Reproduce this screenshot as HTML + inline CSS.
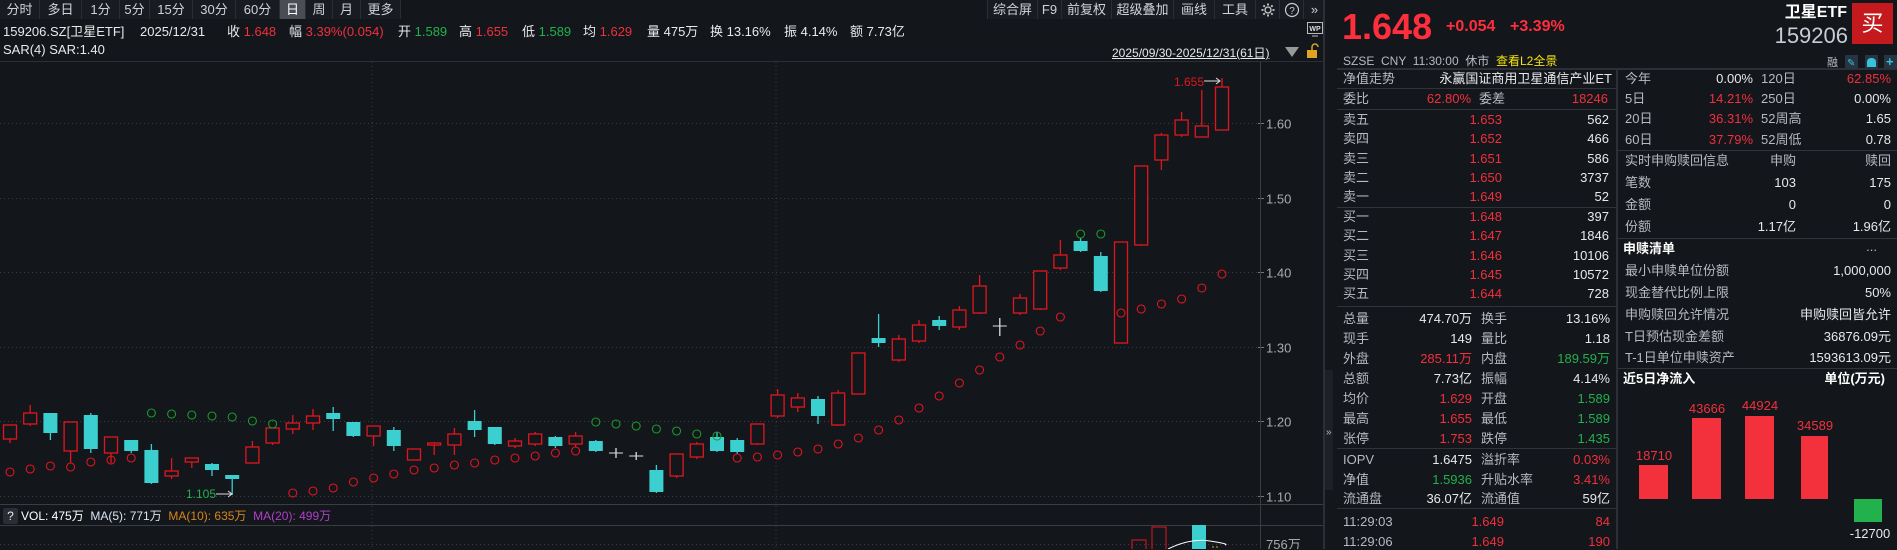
<!DOCTYPE html>
<html><head><meta charset="utf-8">
<style>
*{margin:0;padding:0;box-sizing:border-box}
body{width:1897px;height:549px;background:#13161b;overflow:hidden;position:relative;font-family:"Liberation Sans","Noto Sans CJK SC",sans-serif;color:#d9dbe0;font-size:13px}
.a{position:absolute;white-space:nowrap;line-height:16px}
.r{color:#f0303c}.g{color:#22b14c}.w{color:#e8e9ec}.l{color:#b6bac2}
.tb{position:absolute;top:0;height:19px;line-height:19px;font-size:13px;color:#d0d2d6;text-align:center;border-right:1px solid #2a2d33;background:#181b21}
.hl{position:absolute;height:1px;background:#30333a}
</style></head><body>
<div class="tb" style="left:0;width:40px">分时</div>
<div class="tb" style="left:40px;width:42px">多日</div>
<div class="tb" style="left:82px;width:38px">1分</div>
<div class="tb" style="left:120px;width:30px">5分</div>
<div class="tb" style="left:150px;width:43px">15分</div>
<div class="tb" style="left:193px;width:43px">30分</div>
<div class="tb" style="left:236px;width:44px">60分</div>
<div class="tb" style="left:280px;width:26px;background:#4a4d54;color:#fff">日</div>
<div class="tb" style="left:306px;width:27px">周</div>
<div class="tb" style="left:333px;width:28px">月</div>
<div class="tb" style="left:361px;width:40px">更多</div>
<div class="tb" style="left:987px;width:51px;border-left:1px solid #2a2d33">综合屏</div>
<div class="tb" style="left:1038px;width:24px">F9</div>
<div class="tb" style="left:1062px;width:50px">前复权</div>
<div class="tb" style="left:1112px;width:62px">超级叠加</div>
<div class="tb" style="left:1174px;width:41px">画线</div>
<div class="tb" style="left:1215px;width:41px">工具</div>
<div class="tb" style="left:1256px;width:24px"><svg width="16" height="16" style="margin-top:2px" viewBox="0 0 16 16"><circle cx="8" cy="8" r="3" fill="none" stroke="#ccc" stroke-width="1.3"/><path d="M8 1.5v2M8 12.5v2M1.5 8h2M12.5 8h2M3.4 3.4l1.4 1.4M11.2 11.2l1.4 1.4M3.4 12.6l1.4-1.4M11.2 4.8l1.4-1.4" stroke="#ccc" stroke-width="1.8"/></svg></div>
<div class="tb" style="left:1280px;width:24px"><svg width="16" height="16" style="margin-top:2px" viewBox="0 0 16 16"><circle cx="8" cy="8" r="6.5" fill="none" stroke="#ccc" stroke-width="1.2"/><text x="8" y="12" font-size="10" fill="#ccc" text-anchor="middle" font-family="Liberation Sans">?</text></svg></div>
<div class="tb" style="left:1304px;width:21px;border:none">»</div>

<div class="a w" style="left:3px;top:24px">159206.SZ[卫星ETF]</div>
<div class="a w" style="left:140px;top:24px">2025/12/31</div>
<div class="a w" style="left:227px;top:24px">收 <span class="r">1.648</span></div>
<div class="a w" style="left:289px;top:24px">幅 <span class="r">3.39%(0.054)</span></div>
<div class="a w" style="left:398px;top:24px">开 <span class="g">1.589</span></div>
<div class="a w" style="left:459px;top:24px">高 <span class="r">1.655</span></div>
<div class="a w" style="left:522px;top:24px">低 <span class="g">1.589</span></div>
<div class="a w" style="left:583px;top:24px">均 <span class="r">1.629</span></div>
<div class="a w" style="left:647px;top:24px">量 475万</div>
<div class="a w" style="left:710px;top:24px">换 13.16%</div>
<div class="a w" style="left:784px;top:24px">振 4.14%</div>
<div class="a w" style="left:850px;top:24px">额 7.73亿</div>
<div class="a w" style="left:3px;top:42px">SAR(4) SAR:1.40</div>
<svg class="a" style="left:1307px;top:22px" width="16" height="15" viewBox="0 0 16 15"><rect x="0.5" y="0.5" width="15" height="11" fill="none" stroke="#bbb"/><text x="8" y="9" font-size="7" fill="#ddd" text-anchor="middle" font-family="Liberation Sans" font-weight="bold">WP</text><path d="M5 14h6" stroke="#bbb"/></svg>
<div class="a w" style="left:1112px;top:45px;font-size:12px;text-decoration:underline">2025/09/30-2025/12/31(61日)</div>
<svg class="a" style="left:1284px;top:46px" width="16" height="12"><path d="M1 1h14L8 11z" fill="#999"/></svg>
<svg class="a" style="left:1305px;top:43px" width="16" height="16"><path d="M7 7V4a3 3 0 0 1 6 0" fill="none" stroke="#e0a420" stroke-width="1.5"/><rect x="2" y="7" width="10" height="8" fill="#e0a420"/></svg>

<svg id="ch" class="a" style="left:0;top:0" width="1325" height="549"></svg>

<div class="a w" style="left:3px;top:508px;width:15px;height:16px;background:#2a2d35;text-align:center;font-size:12px;border-radius:2px">?</div>
<div class="a" style="left:21px;top:508px;font-size:12px;color:#fff">VOL: 475万 &nbsp;<span style="color:#d8e4f0">MA(5): 771万</span> &nbsp;<span style="color:#d6861c">MA(10): 635万</span> &nbsp;<span style="color:#b040c8">MA(20): 499万</span></div>

<div style="position:absolute;left:1323px;top:0;width:2px;height:549px;background:#2c2f36"></div>
<div style="position:absolute;left:1325px;top:370px;width:8px;height:120px;background:#1d2026"></div>
<div class="a l" style="left:1326px;top:425px;font-size:10px">»</div>
<div class="a r" style="left:1342px;top:8px;font-size:36px;line-height:38px;font-weight:bold;color:#ff2e3c">1.648</div>
<div class="a r" style="left:1446px;top:19px;font-size:16px;font-weight:bold;color:#ff2e3c">+0.054</div>
<div class="a r" style="left:1510px;top:19px;font-size:16px;font-weight:bold;color:#ff2e3c">+3.39%</div>
<div class="a w" style="right:50px;top:5px;font-size:16px;font-weight:bold;color:#fff">卫星ETF</div>
<div class="a l" style="right:49px;top:24px;font-size:22px;line-height:24px;color:#c9ccd2">159206</div>
<div class="a" style="left:1852px;top:3px;width:41px;height:41px;background:#c41a1e;color:#fff;font-size:22px;line-height:41px;text-align:center">买</div>
<div class="a l" style="left:1827px;top:55px;font-size:11px">融</div>
<div class="a" style="left:1845px;top:55px;width:13px;height:13px;background:#273444"></div>
<div class="a" style="left:1865px;top:55px;width:13px;height:13px;background:#273444"></div>
<div class="a" style="left:1884px;top:55px;width:13px;height:13px;background:#273444"></div>
<div class="a" style="left:1847px;top:56px;color:#35c3d8;font-size:10px">✎</div>
<div class="a" style="left:1867px;width:9px;height:9px;background:#35c3d8;border-radius:4px 4px 0 0;top:58px"></div>
<div class="a" style="left:1886px;top:54px;color:#35c3d8;font-size:13px;font-weight:bold">+</div>
<div class="a l" style="left:1343px;top:53px;font-size:12px">SZSE &nbsp;CNY &nbsp;11:30:00 &nbsp;休市 &nbsp;<span style="color:#f4e30e">查看L2全景</span></div>
<div class="hl" style="left:1337px;top:68px;width:560px;height:2px;background:#2c2f36"></div>
<div style="position:absolute;left:1616px;top:70px;width:2px;height:479px;background:#2c2f36"></div>

<div class="a l" style="left:1343px;top:71px">净值走势</div>
<div class="a w" style="right:285px;top:71px">永赢国证商用卫星通信产业ET</div>
<div class="hl" style="left:1337px;top:88px;width:279px"></div>
<div class="a l" style="left:1343px;top:91px">委比</div><div class="a r" style="right:426px;top:91px">62.80%</div><div class="a l" style="left:1479px;top:91px">委差</div><div class="a r" style="right:289px;top:91px">18246</div>
<div class="hl" style="left:1337px;top:109px;width:279px"></div>

<div class="hl" style="left:1337px;top:207px;width:279px"></div>
<div class="hl" style="left:1337px;top:306px;width:279px"></div>
<div class="hl" style="left:1337px;top:448px;width:279px"></div>
<div class="hl" style="left:1337px;top:508px;width:279px"></div>

<div class="hl" style="left:1618px;top:150px;width:279px"></div>
<div class="hl" style="left:1618px;top:238px;width:279px"></div>
<div class="hl" style="left:1618px;top:368px;width:279px"></div>
<div class="a w" style="left:1623px;top:241px;font-weight:bold;color:#fff">申赎清单</div>
<div class="a l" style="right:20px;top:239px">...</div>
<div class="a w" style="left:1623px;top:371px;font-weight:bold;color:#fff">近5日净流入</div>
<div class="a w" style="right:12px;top:371px;font-weight:bold;color:#fff">单位(万元)</div>
<svg class="a" style="left:1618px;top:390px" width="279" height="159">
<g fill="#f2313c"><rect x="21" y="75" width="29" height="34"/><rect x="74" y="28" width="29" height="81"/><rect x="127" y="26" width="29" height="83"/><rect x="183" y="46" width="27" height="63"/></g>
<rect x="236" y="109" width="28" height="23" fill="#22b14c"/>
<g fill="#f2313c" font-size="13" font-family="Liberation Sans" text-anchor="middle"><text x="36" y="70">18710</text><text x="89" y="23">43666</text><text x="142" y="20">44924</text><text x="197" y="40">34589</text></g>
<text x="252" y="148" fill="#e8e9ec" font-size="13" font-family="Liberation Sans" text-anchor="middle">-12700</text>
</svg>

<script>
function T(x,y,t,c,right){var d=document.createElement('div');d.className='a '+c;d.style.top=(y-8)+'px';if(right)d.style.right=(1897-x)+'px';else d.style.left=x+'px';d.textContent=t;document.body.appendChild(d);}
var ob=[['卖五','1.653','562',120],['卖四','1.652','466',139],['卖三','1.651','586',159],['卖二','1.650','3737',178],['卖一','1.649','52',197],['买一','1.648','397',217],['买二','1.647','1846',236],['买三','1.646','10106',256],['买四','1.645','10572',275],['买五','1.644','728',294]];
ob.forEach(function(o){T(1343,o[3],o[0],'l');T(1502,o[3],o[1],'r',1);T(1609,o[3],o[2],'w',1);});
var st=[['总量','474.70万','w','换手','13.16%','w',319],['现手','149','w','量比','1.18','w',339],['外盘','285.11万','r','内盘','189.59万','g',359],['总额','7.73亿','w','振幅','4.14%','w',379],['均价','1.629','r','开盘','1.589','g',399],['最高','1.655','r','最低','1.589','g',419],['张停','1.753','r','跌停','1.435','g',439],['IOPV','1.6475','w','溢折率','0.03%','r',460],['净值','1.5936','g','升贴水率','3.41%','r',480],['流通盘','36.07亿','w','流通值','59亿','w',499]];
st.forEach(function(o){T(1343,o[6],o[0],'l');T(1472,o[6],o[1],o[2],1);T(1481,o[6],o[3],'l');T(1610,o[6],o[4],o[5],1);});
T(1343,522,'11:29:03','l');T(1504,522,'1.649','r',1);T(1610,522,'84','r',1);
T(1343,542,'11:29:06','l');T(1504,542,'1.649','r',1);T(1610,542,'190','r',1);
var rt=[['今年','0.00%','w','120日','62.85%','r',79],['5日','14.21%','r','250日','0.00%','w',99],['20日','36.31%','r','52周高','1.65','w',119],['60日','37.79%','r','52周低','0.78','w',140]];
rt.forEach(function(o){T(1625,o[6],o[0],'l');T(1753,o[6],o[1],o[2],1);T(1761,o[6],o[3],'l');T(1891,o[6],o[4],o[5],1);});
T(1625,161,'实时申购赎回信息','l');T(1796,161,'申购','l',1);T(1891,161,'赎回','l',1);
[['笔数','103','175',183],['金额','0','0',205],['份额','1.17亿','1.96亿',227]].forEach(function(o){T(1625,o[3],o[0],'l');T(1796,o[3],o[1],'w',1);T(1891,o[3],o[2],'w',1);});
[['最小申赎单位份额','1,000,000',271],['现金替代比例上限','50%',293],['申购赎回允许情况','申购赎回皆允许',315],['T日预估现金差额','36876.09元',337],['T-1日单位申赎资产','1593613.09元',358]].forEach(function(o){T(1625,o[2],o[0],'l');T(1891,o[2],o[1],'w',1);});

var s='';
function yp(p){return 123+(1.60-p)*746;}
[1.6,1.5,1.4,1.3,1.2,1.1].forEach(function(p){var y=Math.round(yp(p))+.5;s+='<line x1="0" x2="1258" y1="'+y+'" y2="'+y+'" stroke="#3a3d44" stroke-dasharray="1,3"/><line x1="1258" x2="1264" y1="'+y+'" y2="'+y+'" stroke="#777"/><text x="1266" y="'+(y+5)+'" fill="#aaa" font-size="13" font-family="Liberation Sans">'+p.toFixed(2)+'</text>';});
[372,776].forEach(function(x){s+='<line x1="'+x+'" x2="'+x+'" y1="62" y2="549" stroke="#3a3d44" stroke-dasharray="1,3"/>';});
s+='<line x1="1260.5" x2="1260.5" y1="62" y2="549" stroke="#3a3d44"/>';
s+='<line x1="0" x2="1325" y1="61.5" y2="61.5" stroke="#2c2f36"/>';
s+='<line x1="0" x2="1323" y1="504.5" y2="504.5" stroke="#3a3d44"/><line x1="0" x2="1323" y1="525.5" y2="525.5" stroke="#3a3d44"/>';
s+='<line x1="0" x2="1258" y1="544.5" y2="544.5" stroke="#3a3d44" stroke-dasharray="1,3"/><text x="1266" y="549" fill="#aaa" font-size="13" font-family="Liberation Sans">756万</text>';
var C=[[425,439,425,443,'r'],[413,424,405,426,'r'],[413,433,413,440,'c'],[422,451,422,463,'r'],[415,449,413,453,'c'],[437,453,437,463,'r'],[440,451,440,453,'c'],[450,483,444,484,'c'],[471,476,458,479,'r'],[458,462,458,468,'r'],[464,470,463,476,'c'],[475,479,475,495,'c'],[447,463,441,463,'r'],[428,443,428,445,'r'],[423,429,415,434,'r'],[416,423,409,430,'r'],[413,419,407,431,'c'],[422,436,422,437,'c'],[426,436,426,446,'r'],[430,446,427,451,'c'],[449,460,449,460,'r'],[443,445,442,455,'r'],[434,445,428,455,'r'],[421,430,410,437,'c'],[427,444,427,445,'c'],[441,446,438,448,'r'],[434,444,432,446,'r'],[437,446,436,448,'c'],[436,444,432,447,'r'],[441,451,440,452,'c'],[453,454,448,458,'x'],[456,457,452,460,'x'],[470,492,465,493,'c'],[454,476,454,478,'r'],[444,457,442,459,'r'],[437,451,432,452,'c'],[440,452,438,454,'c'],[424,444,424,445,'r'],[395,416,389,418,'r'],[398,407,393,412,'r'],[399,416,396,424,'c'],[393,425,390,426,'r'],[353,394,353,394,'r'],[338,343,314,347,'c'],[339,360,335,362,'r'],[325,341,320,343,'r'],[320,326,316,330,'c'],[310,327,306,330,'r'],[286,313,275,314,'r'],[326,327,318,336,'x'],[298,313,294,315,'r'],[271,309,280,310,'r'],[255,268,240,270,'r'],[241,251,238,252,'c'],[256,291,252,292,'c'],[242,343,242,343,'r'],[166,245,166,246,'r'],[135,160,133,170,'r'],[120,135,112,137,'r'],[126,137,90,137,'r'],[87,130,78,130,'r']];
C.forEach(function(c,i){var x=10+20.2*i;var col=c[4]=='c'?'#3ccfcf':(c[4]=='x'?'#ddd':'#e0161e');
s+='<line x1="'+x+'" x2="'+x+'" y1="'+c[2]+'" y2="'+c[3]+'" stroke="'+col+'" stroke-width="1.3"/>';
if(c[4]=='c')s+='<rect x="'+(x-7)+'" y="'+c[0]+'" width="14" height="'+Math.max(1,c[1]-c[0])+'" fill="'+col+'"/>';
else if(c[4]=='x')s+='<line x1="'+(x-7)+'" x2="'+(x+7)+'" y1="'+c[0]+'" y2="'+c[0]+'" stroke="'+col+'"/>';
else s+='<rect x="'+(x-6.5)+'" y="'+c[0]+'" width="13" height="'+Math.max(1,c[1]-c[0])+'" fill="#13161b" stroke="'+col+'" stroke-width="1.3"/>';});
var S=[472,469,466,467,462,460,458,-413,-414,-415,-416,-417,-421,-424,493,491,488,482,478,474,470,468,465,463,460,458,456,453,451,-422,-424,-426,-429,-431,-434,-436,458,457,455,452,449,444,438,430,420,408,396,383,370,357,345,331,317,-234,-234,313,309,304,299,288,274];
S.forEach(function(v,i){var x=10+20.2*i;var g=v<0;s+='<circle cx="'+x+'" cy="'+Math.abs(v)+'" r="4" fill="none" stroke="'+(g?'#1a9a2a':'#e0161e')+'" stroke-width="1.1"/>';});
s+='<text x="1174" y="86" fill="#e0161e" font-size="12" font-family="Liberation Sans">1.655</text><path d="M1204 81h16m-4-3l4 3-4 3" stroke="#ddd" fill="none"/>';
s+='<text x="186" y="498" fill="#22b14c" font-size="12" font-family="Liberation Sans">1.105</text><path d="M216 494h16m-4-3l4 3-4 3" stroke="#ddd" fill="none"/>';
s+='<rect x="1132" y="540" width="14" height="12" fill="none" stroke="#e0161e"/><rect x="1152" y="527" width="14" height="25" fill="none" stroke="#e0161e"/><rect x="1192" y="525" width="14" height="24" fill="#3ccfcf"/>';
s+='<path d="M1168 549Q1190 538 1210 541T1225 545" stroke="#fff" fill="none"/><path d="M1212 547h8" stroke="#d6a41c" stroke-dasharray="2,2"/>';
document.getElementById('ch').innerHTML=s;
</script>
</body></html>
